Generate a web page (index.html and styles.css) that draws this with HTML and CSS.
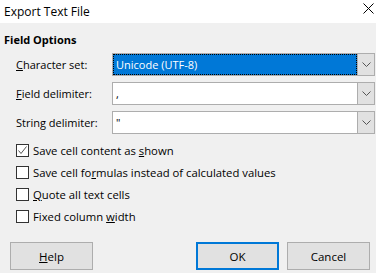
FILE: index.html
```html
<!DOCTYPE html>
<html lang="en">
<head>
    <meta charset="UTF-8">
    <meta name="viewport" content="width=device-width, initial-scale=1.0">
    <title>Export Text File</title>
    <link rel="stylesheet" href="styles.css">
</head>
<body>
    <div class="titlebar">
        <span class="title">Export Text File</span>
        <svg class="close" width="11" height="11" viewBox="0 0 11 11">
            <path d="M0.5 0.5L10.5 10.5M10.5 0.5L0.5 10.5" stroke="#000" stroke-width="1" fill="none"/>
        </svg>
    </div>

    <div class="dialog">
        <div class="section-title">Field Options</div>

        <div class="options">
            <label class="opt-label"><u>C</u>haracter set:</label>
            <div class="combo">
                <div class="combo-value selected">Unicode (UTF-8)</div>
                <div class="combo-btn">
                    <svg width="9" height="5" viewBox="0 0 9 5"><path d="M0.5 0.5L4.5 4.5L8.5 0.5" stroke="#555" fill="none"/></svg>
                </div>
            </div>

            <label class="opt-label"><u>F</u>ield delimiter:</label>
            <div class="combo">
                <div class="combo-value">,</div>
                <div class="combo-btn">
                    <svg width="9" height="5" viewBox="0 0 9 5"><path d="M0.5 0.5L4.5 4.5L8.5 0.5" stroke="#555" fill="none"/></svg>
                </div>
            </div>

            <label class="opt-label">String delimiter:</label>
            <div class="combo">
                <div class="combo-value">"</div>
                <div class="combo-btn">
                    <svg width="9" height="5" viewBox="0 0 9 5"><path d="M0.5 0.5L4.5 4.5L8.5 0.5" stroke="#555" fill="none"/></svg>
                </div>
            </div>
        </div>

        <div class="checks">
            <div class="check-row">
                <span class="box">
                    <svg width="11" height="11" viewBox="0 0 11 11"><path d="M1.5 5.5L4 8.5L9.5 1.5" stroke="#555" fill="none"/></svg>
                </span>
                <span>Save cell content as <u>s</u>hown</span>
            </div>
            <div class="check-row">
                <span class="box"></span>
                <span>Save cell fo<u>r</u>mulas instead of calculated values</span>
            </div>
            <div class="check-row">
                <span class="box"></span>
                <span><u>Q</u>uote all text cells</span>
            </div>
            <div class="check-row">
                <span class="box"></span>
                <span>Fixed column <u>w</u>idth</span>
            </div>
        </div>

        <div class="buttons">
            <button class="btn"><u>H</u>elp</button>
            <div class="btn-group">
                <button class="btn default">OK</button>
                <button class="btn">Cancel</button>
            </div>
        </div>
    </div>
</body>
</html>
```

FILE: styles.css
```css
body {
    margin: 0;
    width: 376px;
    height: 273px;
    overflow: hidden;
    background-color: #f0f0f0;
    font-family: "Open Sans", "Noto Sans", sans-serif;
    font-size: 11px;
    color: #000;
}
.titlebar {
    height: 23px;
    background: #fff;
    display: flex;
    align-items: center;
    justify-content: space-between;
    padding: 0 2px 0 4px;
    font-size: 12px;
}
.close {
    margin-bottom: 7px;
}
.section-title {
    font-weight: bold;
    font-size: 11px;
    line-height: 14px;
    padding: 10px 0 0 4px;
}
.options {
    display: grid;
    grid-template-columns: 96px 1fr;
    row-gap: 6px;
    align-items: center;
    margin: 6px 1px 0 16px;
}
.combo {
    display: flex;
    height: 23px;
    border: 1px solid #adadad;
    background: #fff;
    box-sizing: border-box;
}
.combo-value {
    flex: 1;
    padding-left: 3px;
    line-height: 21px;
}
.combo-value.selected {
    background: #0078d7;
    color: #fff;
    border: 1px dotted #000;
    line-height: 19px;
    padding-left: 2px;
}
.combo-btn {
    width: 16px;
    border-left: 1px solid #adadad;
    background: #e1e1e1;
    display: flex;
    align-items: center;
    justify-content: center;
}
.checks {
    margin: 5px 0 0 16px;
    font-size: 11.3px;
}
.check-row {
    height: 22px;
    display: flex;
    align-items: center;
    gap: 4px;
}
.box {
    width: 13px;
    height: 13px;
    box-sizing: border-box;
    border: 1px solid #333;
    background: #fff;
    display: flex;
    align-items: center;
    justify-content: center;
}
.buttons {
    display: flex;
    justify-content: space-between;
    margin-top: 15px;
    padding: 0 6px 0 10px;
}
.btn-group {
    display: flex;
    gap: 8px;
}
.btn {
    width: 83px;
    height: 28px;
    background: #e1e1e1;
    border: 1px solid #adadad;
    font-family: inherit;
    font-size: 11.5px;
    color: #000;
    padding: 0;
}
.btn.default {
    border: 2px solid #0078d7;
}
```
